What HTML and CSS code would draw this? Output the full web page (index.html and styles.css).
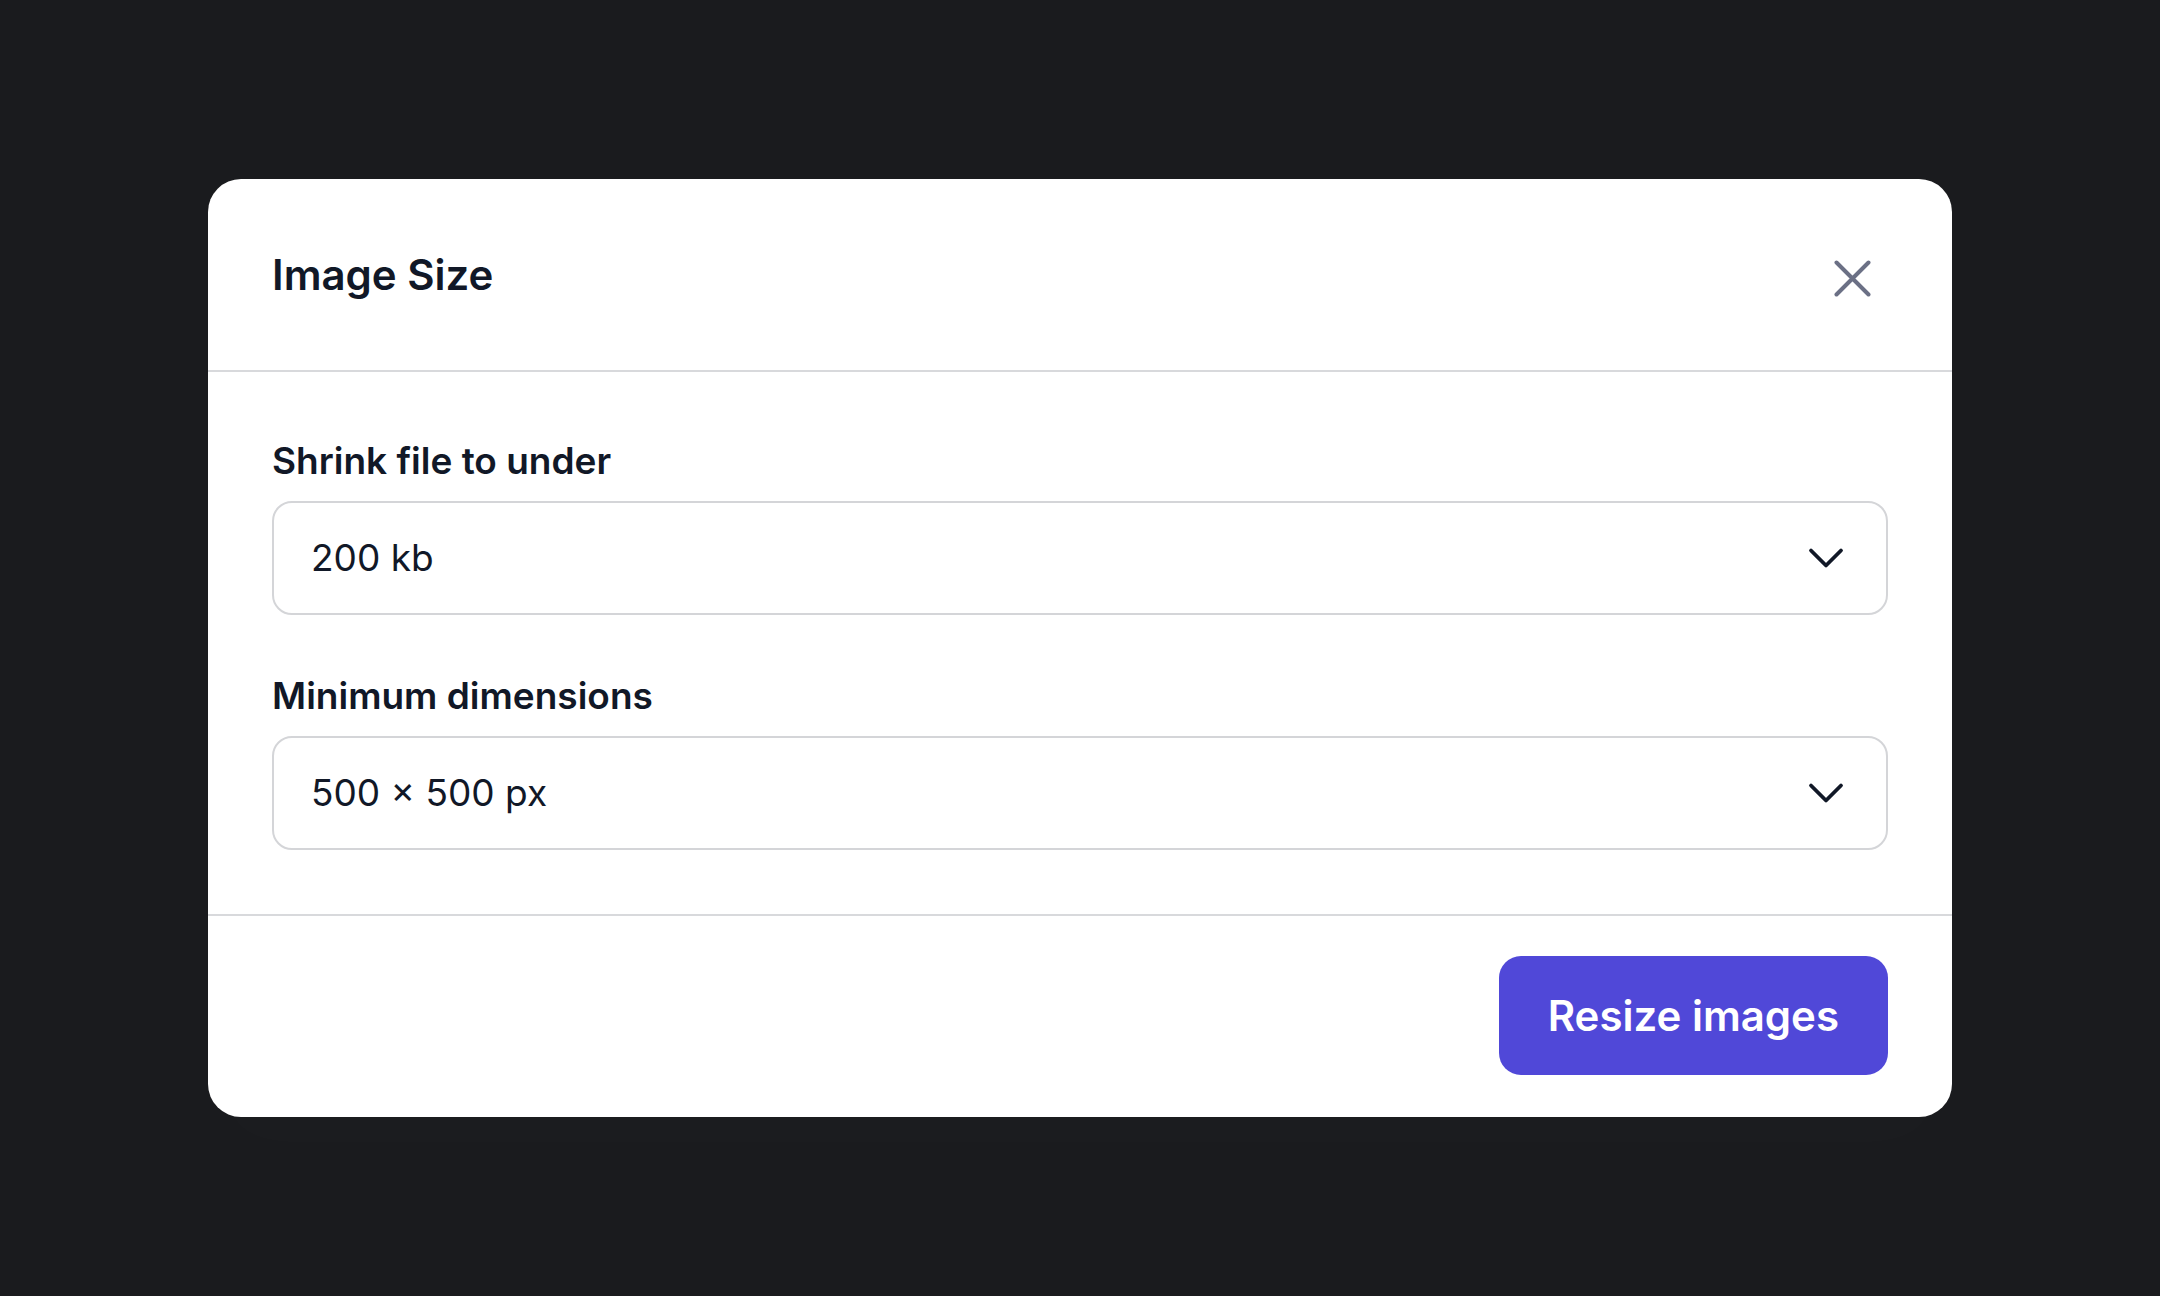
FILE: index.html
```html
<!DOCTYPE html>
<html lang="en">
<head>
<meta charset="utf-8">
<title>Image Size</title>
<link rel="stylesheet" href="styles.css">
</head>
<body>
<div class="backdrop">
  <div class="modal" role="dialog" aria-labelledby="modal-title">
    <div class="modal-header">
      <h2 id="modal-title" class="modal-title">Image Size</h2>
      <button class="close-btn" aria-label="Close">
        <svg width="37" height="37" viewBox="0 0 37 37" fill="none" stroke="currentColor" stroke-width="4" stroke-linecap="round">
          <path d="M2.5 2.5L34.5 34.5M34.5 2.5L2.5 34.5"/>
        </svg>
      </button>
    </div>
    <div class="modal-body">
      <div class="field">
        <label class="field-label">Shrink file to under</label>
        <div class="select">
          <span class="select-value">200 kb</span>
          <svg class="chevron" width="48" height="48" viewBox="0 0 24 24" fill="none" stroke="currentColor" stroke-width="1.9" stroke-linecap="round" stroke-linejoin="round">
            <path d="M4.5 8.25l7.5 7.5 7.5-7.5"/>
          </svg>
        </div>
      </div>
      <div class="field">
        <label class="field-label">Minimum dimensions</label>
        <div class="select">
          <span class="select-value">500 × 500 px</span>
          <svg class="chevron" width="48" height="48" viewBox="0 0 24 24" fill="none" stroke="currentColor" stroke-width="1.9" stroke-linecap="round" stroke-linejoin="round">
            <path d="M4.5 8.25l7.5 7.5 7.5-7.5"/>
          </svg>
        </div>
      </div>
    </div>
    <div class="modal-footer">
      <button class="primary-btn">Resize images</button>
    </div>
  </div>
</div>
</body>
</html>
```

FILE: styles.css
```css
* {
  box-sizing: border-box;
}

html, body {
  margin: 0;
  padding: 0;
  height: 100%;
}

body {
  background: #1a1b1e;
  font-family: "Inter", "Noto Sans", "Liberation Sans", sans-serif;
  color: #111827;
}

.backdrop {
  height: 100vh;
  display: flex;
  align-items: center;
  justify-content: center;
}

.modal {
  width: 1744px;
  background: #ffffff;
  border-radius: 33px;
  box-shadow: 0 40px 70px rgba(255, 255, 255, 0.012);
}

.modal-header {
  display: flex;
  align-items: center;
  justify-content: space-between;
  padding: 64px 64px;
  border-bottom: 2px solid #d8d9dc;
}

.modal-title {
  margin: 0;
  font-size: 42px;
  line-height: 63px;
  font-weight: 600;
  color: #111827;
}

.close-btn {
  display: flex;
  align-items: center;
  justify-content: center;
  padding: 0;
  margin-right: 17px;
  border: none;
  background: none;
  color: #6b7085;
  transform: translateY(4px);
}

.modal-body {
  display: flex;
  flex-direction: column;
  gap: 57px;
  padding: 65px 64px 64px;
}

.field {
  display: flex;
  flex-direction: column;
  gap: 16px;
}

.field-label {
  font-size: 37px;
  line-height: 48px;
  font-weight: 600;
  color: #111827;
}

.select {
  display: flex;
  align-items: center;
  justify-content: space-between;
  height: 114px;
  padding: 0 36px 0 37px;
  border: 2px solid #d4d5d8;
  border-radius: 20px;
  background: #ffffff;
}

.select-value {
  font-size: 37px;
  line-height: 54px;
  font-weight: 400;
  color: #111827;
}

.chevron {
  color: #111827;
}

.modal-footer {
  display: flex;
  justify-content: flex-end;
  padding: 40px 64px 42px;
  border-top: 2px solid #d8d9dc;
}

.primary-btn {
  font-family: inherit;
  font-size: 42px;
  line-height: 63px;
  font-weight: 600;
  color: #ffffff;
  background: #5048d8;
  border: none;
  border-radius: 22px;
  padding: 28px 49px;
}
```
